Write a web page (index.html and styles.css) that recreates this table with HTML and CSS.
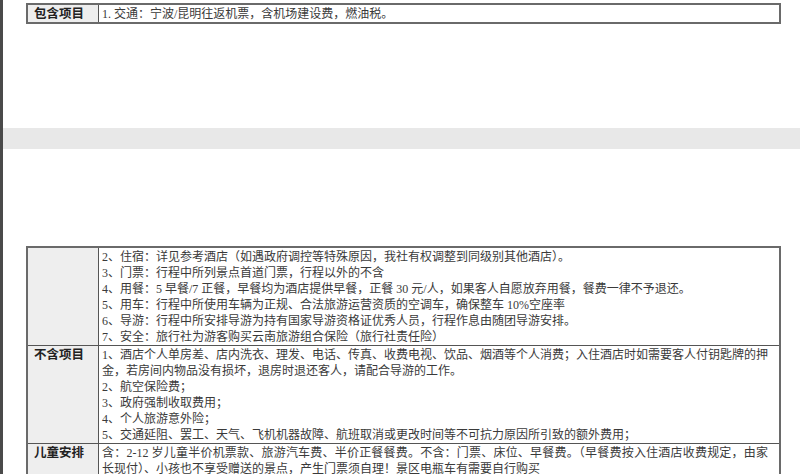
FILE: index.html
```html
<!DOCTYPE html>
<html lang="zh-CN">
<head>
    <meta charset="UTF-8">
    <meta name="viewport" content="width=device-width, initial-scale=1.0">
    <title>费用说明</title>
    <link rel="stylesheet" href="styles.css">
</head>
<body>
    <div class="page page-top">
        <table class="fee">
            <tr>
                <td class="label">包含项目</td>
                <td class="content">1. 交通：宁波/昆明往返机票，含机场建设费，燃油税。</td>
            </tr>
        </table>
    </div>

    <div class="gap"></div>

    <div class="page page-bottom">
        <table class="fee">
            <tr>
                <td class="label"></td>
                <td class="content">
                    <p>2、住宿：详见参考酒店（如遇政府调控等特殊原因，我社有权调整到同级别其他酒店）。</p>
                    <p>3、门票：行程中所列景点首道门票，行程以外的不含</p>
                    <p>4、用餐：5 早餐/7 正餐，早餐均为酒店提供早餐，正餐 30 元/人，如果客人自愿放弃用餐，餐费一律不予退还。</p>
                    <p>5、用车：行程中所使用车辆为正规、合法旅游运营资质的空调车，确保整车 10%空座率</p>
                    <p>6、导游：行程中所安排导游为持有国家导游资格证优秀人员，行程作息由随团导游安排。</p>
                    <p>7、安全：旅行社为游客购买云南旅游组合保险（旅行社责任险）</p>
                </td>
            </tr>
            <tr>
                <td class="label">不含项目</td>
                <td class="content">
                    <p>1、酒店个人单房差、店内洗衣、理发、电话、传真、收费电视、饮品、烟酒等个人消费；入住酒店时如需要客人付钥匙牌的押金，若房间内物品没有损坏，退房时退还客人，请配合导游的工作。</p>
                    <p>2、航空保险费；</p>
                    <p>3、政府强制收取费用；</p>
                    <p>4、个人旅游意外险；</p>
                    <p>5、交通延阻、罢工、天气、飞机机器故障、航班取消或更改时间等不可抗力原因所引致的额外费用；</p>
                </td>
            </tr>
            <tr>
                <td class="label">儿童安排</td>
                <td class="content">
                    <p>含：2-12 岁儿童半价机票款、旅游汽车费、半价正餐餐费。不含：门票、床位、早餐费。（早餐费按入住酒店收费规定，由家长现付）、小孩也不享受赠送的景点，产生门票须自理！景区电瓶车有需要自行购买</p>
                </td>
            </tr>
        </table>
    </div>
</body>
</html>
```

FILE: styles.css
```css
html, body {
    margin: 0;
    height: 100%;
    overflow: hidden;
}
body {
    background: #fff;
    font-family: "Liberation Serif", "Noto Sans CJK SC", serif;
    color: #2e2e2e;
    border-left: 3px solid #4a4a4a;
    box-sizing: border-box;
}
.page {
    padding-left: 23px;
}
.page-top {
    padding-top: 3px;
    height: 128px;
    box-sizing: border-box;
}
.page-bottom {
    padding-top: 97px;
}
.gap {
    height: 21px;
    background: #e8e8e8;
}
.fee {
    width: 755px;
    border-collapse: collapse;
    border: 2px solid #6a6a6a;
    font-size: 12px;
    line-height: 16px;
}
.fee td {
    border: 1px solid #555;
    vertical-align: top;
    padding: 1px 11px 0 3px;
}
.label {
    width: 60px;
    background: #eeeeee;
    font-weight: bold;
    font-size: 12.5px;
    color: #222;
    padding-left: 6px !important;
    padding-right: 4px !important;
}
.content {
    text-align: justify;
    color: #3a3a3a;
}
.content p {
    margin: 0;
}
```
